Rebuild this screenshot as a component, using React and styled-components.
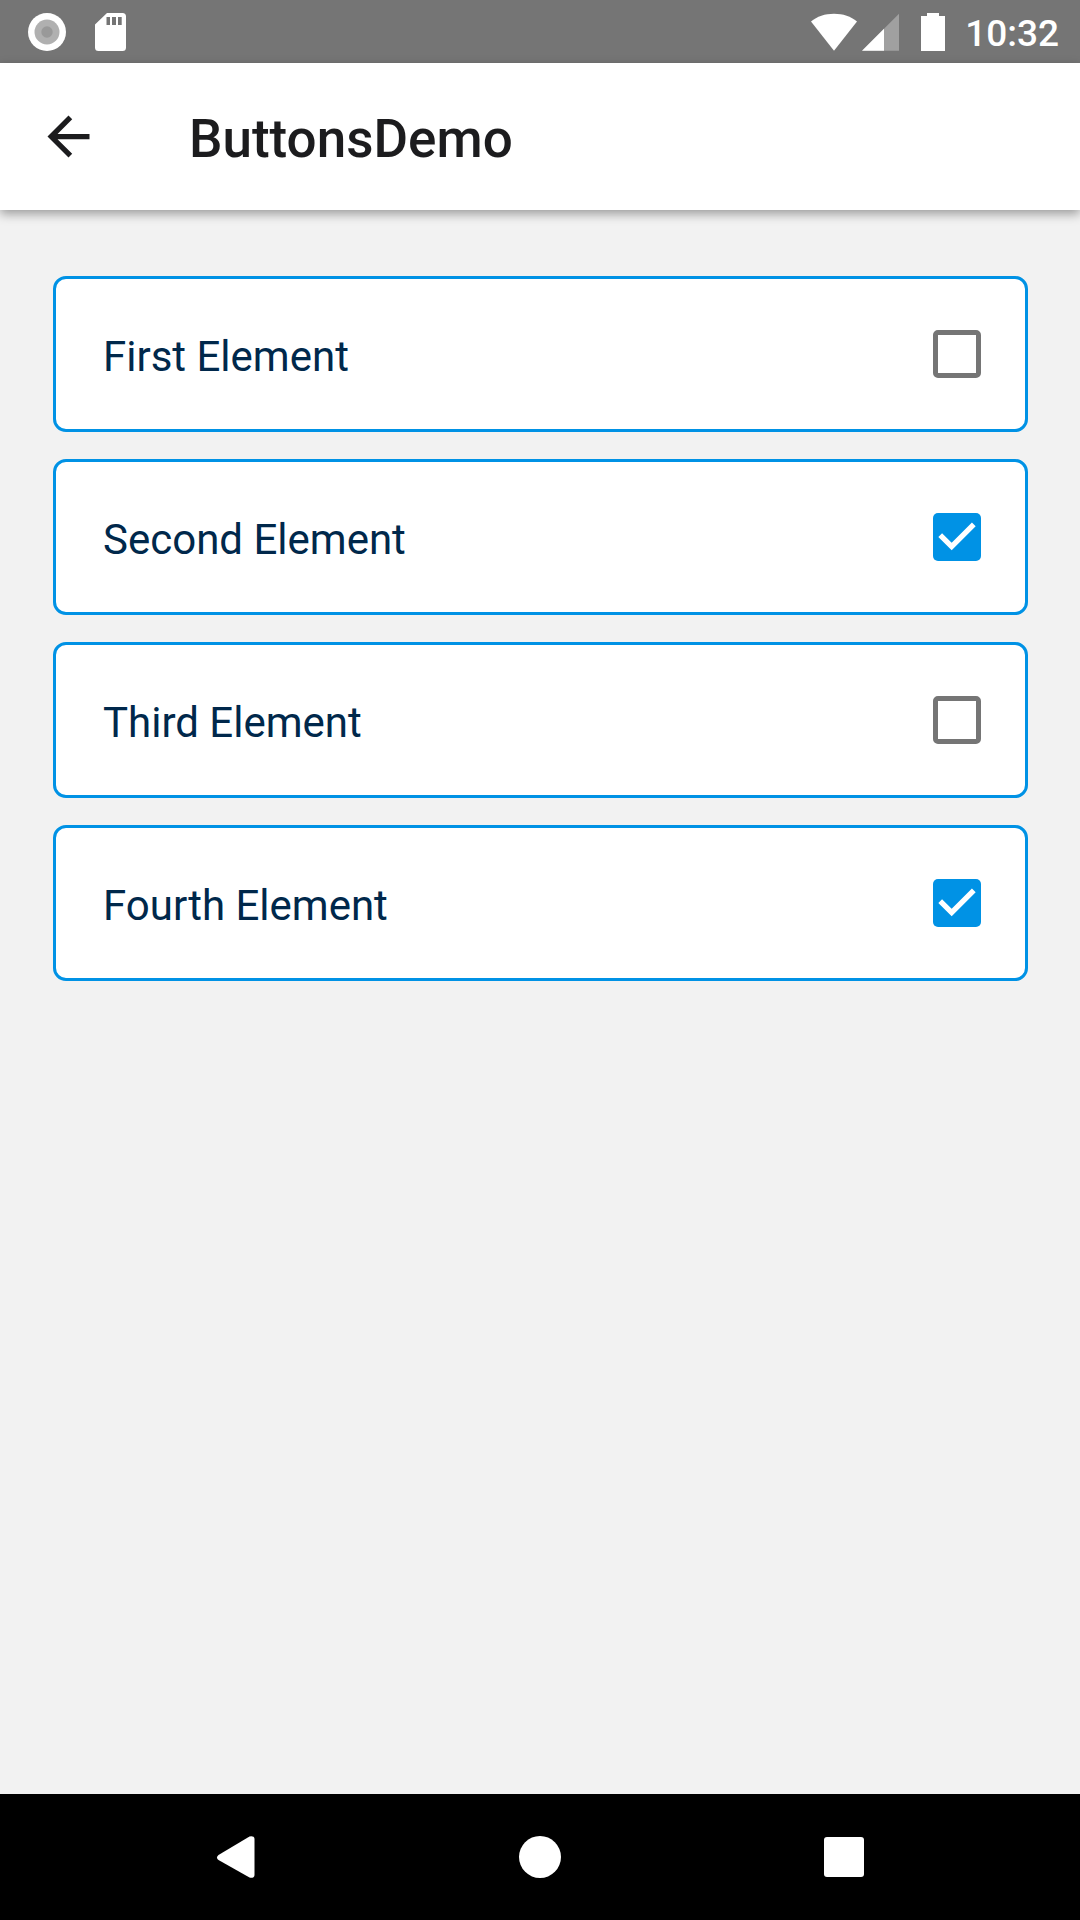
import React from "react";
import styled, { createGlobalStyle } from "styled-components";

const colors = {
  status: "#757575",
  page: "#f2f2f2",
  accent: "#0092e5",
  text: "#00284b",
  title: "#1c1c1e",
  box: "#757575",
};

const GlobalStyle = createGlobalStyle`
  *, *::before, *::after { box-sizing: border-box; }
  body {
    margin: 0;
    background: ${colors.page};
    font-family: Roboto, "Liberation Sans", sans-serif;
  }
`;

const Screen = styled.div`
  display: flex;
  flex-direction: column;
  min-height: 100vh;
`;

const StatusBar = styled.div`
  display: flex;
  align-items: center;
  justify-content: space-between;
  height: 63px;
  padding: 0 21px 0 28px;
  background: ${colors.status};
  color: #fff;
`;

const StatusGroup = styled.div`
  display: flex;
  align-items: center;
  gap: ${(p) => p.$gap}px;
`;

const Clock = styled.time`
  font-size: 37px;
  font-weight: 500;
  line-height: 40px;
  padding-top: 4px;
`;

const Glyph = styled.svg`
  display: block;
  flex: none;
  fill: #fff;
`;

const AppBar = styled.header`
  position: relative;
  display: flex;
  align-items: center;
  gap: 73px;
  height: 147px;
  padding: 0 21px;
  background: #fff;
  color: ${colors.title};
  box-shadow: 0 4px 10px rgba(0, 0, 0, 0.36);
`;

const BackButton = styled.button`
  display: flex;
  padding: 16px;
  border: 0;
  background: none;
  color: inherit;
  cursor: pointer;

  svg {
    fill: currentColor;
  }
`;

const Title = styled.h1`
  margin: 0;
  padding-top: 4px;
  font-size: 53px;
  font-weight: 500;
  line-height: 62px;
`;

const List = styled.main`
  flex: 1;
  display: flex;
  flex-direction: column;
  gap: 27px;
  padding: 66px 52px 66px 53px;
`;

const Card = styled.label`
  display: flex;
  align-items: center;
  justify-content: space-between;
  height: 156px;
  padding: 0 44px 0 47px;
  border: 3px solid ${colors.accent};
  border-radius: 13px;
  background: #fff;
  color: ${colors.text};
  font-size: 42px;
  line-height: 50px;
  cursor: pointer;
`;

const CardText = styled.span`
  padding-top: 5px;
`;

const Checkbox = styled.input`
  appearance: none;
  width: 48px;
  height: 48px;
  margin: 0;
  border: 5px solid ${colors.box};
  border-radius: 5px;
  cursor: pointer;

  &:checked {
    border: 0;
    background: ${colors.accent};
  }

  &:checked::before {
    content: "";
    display: block;
    width: 100%;
    height: 100%;
    background: #fff;
    clip-path: polygon(
      38.9% 77.8%, 11.1% 50%, 18.9% 42.2%,
      38.9% 62.1%, 81.1% 19.9%, 88.9% 27.8%
    );
  }
`;

const NavBar = styled.nav`
  display: flex;
  align-items: center;
  justify-content: center;
  gap: 94px;
  height: 126px;
  background: #000;
`;

const NavButton = styled.button`
  display: flex;
  align-items: center;
  justify-content: center;
  width: 210px;
  height: 126px;
  padding: 0;
  border: 0;
  background: none;
  cursor: pointer;
`;

const items = [
  { id: "first", label: "First Element", checked: false },
  { id: "second", label: "Second Element", checked: true },
  { id: "third", label: "Third Element", checked: false },
  { id: "fourth", label: "Fourth Element", checked: true },
];

export default function App() {
  return (
    <Screen>
      <GlobalStyle />
      <StatusBar>
        <StatusGroup $gap={29}>
          <Glyph width="38" height="38" viewBox="0 0 38 38" aria-hidden="true">
            <circle cx="19" cy="19" r="19" />
            <circle cx="19" cy="19" r="12.5" fill="#b0b0b0" />
            <circle cx="19" cy="19" r="5.7" fill="#999" />
          </Glyph>
          <Glyph width="31" height="38" viewBox="0 0 31 38" aria-hidden="true">
            <path
              fillRule="evenodd"
              d="M12 0H27.500a3.500 3.500 0 0 1 3.500 3.500V34.500a3.500 3.500 0 0 1-3.500 3.500H3.500A3.500 3.500 0 0 1 0 34.500V11.500ZM11.500 4v8h3.500V4ZM17 4v8h4V4ZM23 4v8h3.700V4Z"
            />
          </Glyph>
        </StatusGroup>
        <StatusGroup $gap={20}>
          <StatusGroup $gap={22}>
            <StatusGroup $gap={5}>
              <Glyph width="46" height="38" viewBox="0 0 46 38" aria-hidden="true">
                <path d="M0 8.500C6 3.500 14 .8 23 .8S40 3.500 46 8.500L23 37.800Z" />
              </Glyph>
              <Glyph width="37" height="38" viewBox="0 0 37 38" aria-hidden="true">
                <path d="M37 .8V37.800H0Z" fill="#a0a0a0" />
                <path d="M22 15.800V37.800H0Z" />
              </Glyph>
            </StatusGroup>
            <Glyph width="24" height="38" viewBox="0 0 24 38" aria-hidden="true">
              <path d="M6 0H18V3H24V38H0V3H6Z" />
            </Glyph>
          </StatusGroup>
          <Clock>10:32</Clock>
        </StatusGroup>
      </StatusBar>

      <AppBar>
        <BackButton type="button" aria-label="Back">
          <Glyph width="63" height="63" viewBox="0 0 24 24" aria-hidden="true">
            <path d="M20 11H7.830l5.590-5.590L12 4l-8 8 8 8 1.410-1.410L7.830 13H20v-2z" />
          </Glyph>
        </BackButton>
        <Title>ButtonsDemo</Title>
      </AppBar>

      <List>
        {items.map((item) => (
          <Card key={item.id} htmlFor={item.id}>
            <CardText>{item.label}</CardText>
            <Checkbox id={item.id} type="checkbox" defaultChecked={item.checked} />
          </Card>
        ))}
      </List>

      <NavBar>
        <NavButton type="button" aria-label="Back">
          <Glyph width="42" height="42" viewBox="0 0 42 42" aria-hidden="true">
            <path d="M3.500 19 34.500 .6Q36.500-.4 38.500 .8 39.500 1.500 39.500 3V39Q39.500 40.500 38.500 41.200 36.500 42.400 34.500 41.400L3.500 24Q2 23 2 21.500T3.500 19Z" />
          </Glyph>
        </NavButton>
        <NavButton type="button" aria-label="Home">
          <Glyph width="42" height="42" viewBox="0 0 42 42" aria-hidden="true">
            <circle cx="21" cy="21" r="21" />
          </Glyph>
        </NavButton>
        <NavButton type="button" aria-label="Recent apps">
          <Glyph width="40" height="40" viewBox="0 0 40 40" aria-hidden="true">
            <rect width="40" height="40" rx="3" />
          </Glyph>
        </NavButton>
      </NavBar>
    </Screen>
  );
}
